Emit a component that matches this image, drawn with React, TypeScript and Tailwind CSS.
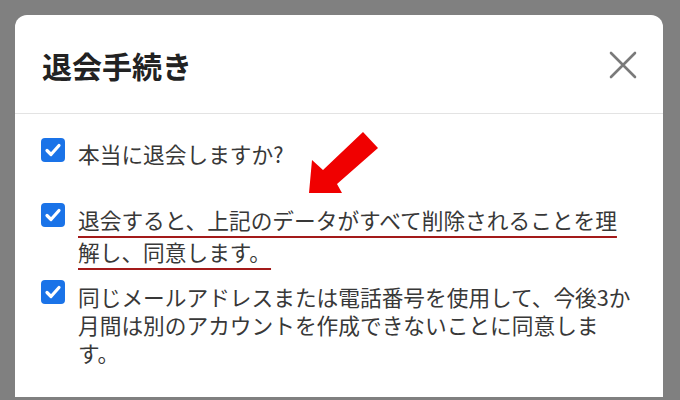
import React from "react";

function Check() {
  return (
    <div className="w-6 h-6 shrink-0 rounded-[4px] bg-[#1a73e8] flex items-center justify-center">
      <svg width="24" height="24" viewBox="0 0 24 24" fill="none">
        <path d="M6 12.5 L10 16.5 L18 7.5" stroke="#ffffff" strokeWidth="3.2" strokeLinecap="round" strokeLinejoin="round" />
      </svg>
    </div>
  );
}

export default function App() {
  const font = { fontFamily: '"Noto Sans CJK JP", "Noto Sans", sans-serif' };
  return (
    <div
      className="relative w-[680px] h-[400px] overflow-hidden bg-[#808080] pt-[15px] pl-[15px] pr-[17px]"
      style={font}
    >
      <div className="h-[382px] bg-white rounded-t-[12px] flex flex-col">
        <div className="h-[98px] shrink-0 flex items-center justify-between pl-[27px] pr-[26px]">
          <h1 className="text-[30px] leading-none font-bold text-[#222222] mt-[1px]">退会手続き</h1>
          <svg width="28" height="28" viewBox="0 0 28 28" fill="none" className="mt-[2px]">
            <path d="M2 2 L26 26 M26 2 L2 26" stroke="#7a7a7a" strokeWidth="2.6" strokeLinecap="round" />
          </svg>
        </div>
        <div className="h-px bg-[#e3e3e3] shrink-0" />
        <div className="flex flex-col pt-[24px] pl-[26px] pr-[20px] text-[21.7px] text-[#383838]">
          <div className="flex items-start gap-[13px]">
            <Check />
            <p className="leading-[32px]">本当に退会しますか?</p>
          </div>
          <div className="flex items-start gap-[13px] mt-[33px]">
            <Check />
            <p className="leading-[32px] mt-[1px] underline decoration-[#a31a1a] decoration-[1.5px] underline-offset-[7px]">
              退会すると、上記のデータがすべて削除されることを理
              <br />
              解し、同意します。
            </p>
          </div>
          <div className="flex items-start gap-[13px] mt-[12px]">
            <Check />
            <p className="leading-[28px] mt-[3px] whitespace-nowrap">
              同じメールアドレスまたは電話番号を使用して、今後3か
              <br />
              月間は別のアカウントを作成できないことに同意しま
              <br />
              す。
            </p>
          </div>
        </div>
      </div>
      <svg
        className="absolute left-0 top-0 pointer-events-none"
        width="680"
        height="400"
        viewBox="0 0 680 400"
      >
        <polygon
          points="309,193 312,160 323,170 363,132 378,148 337,184 342,193"
          fill="#f00000"
        />
      </svg>
    </div>
  );
}
